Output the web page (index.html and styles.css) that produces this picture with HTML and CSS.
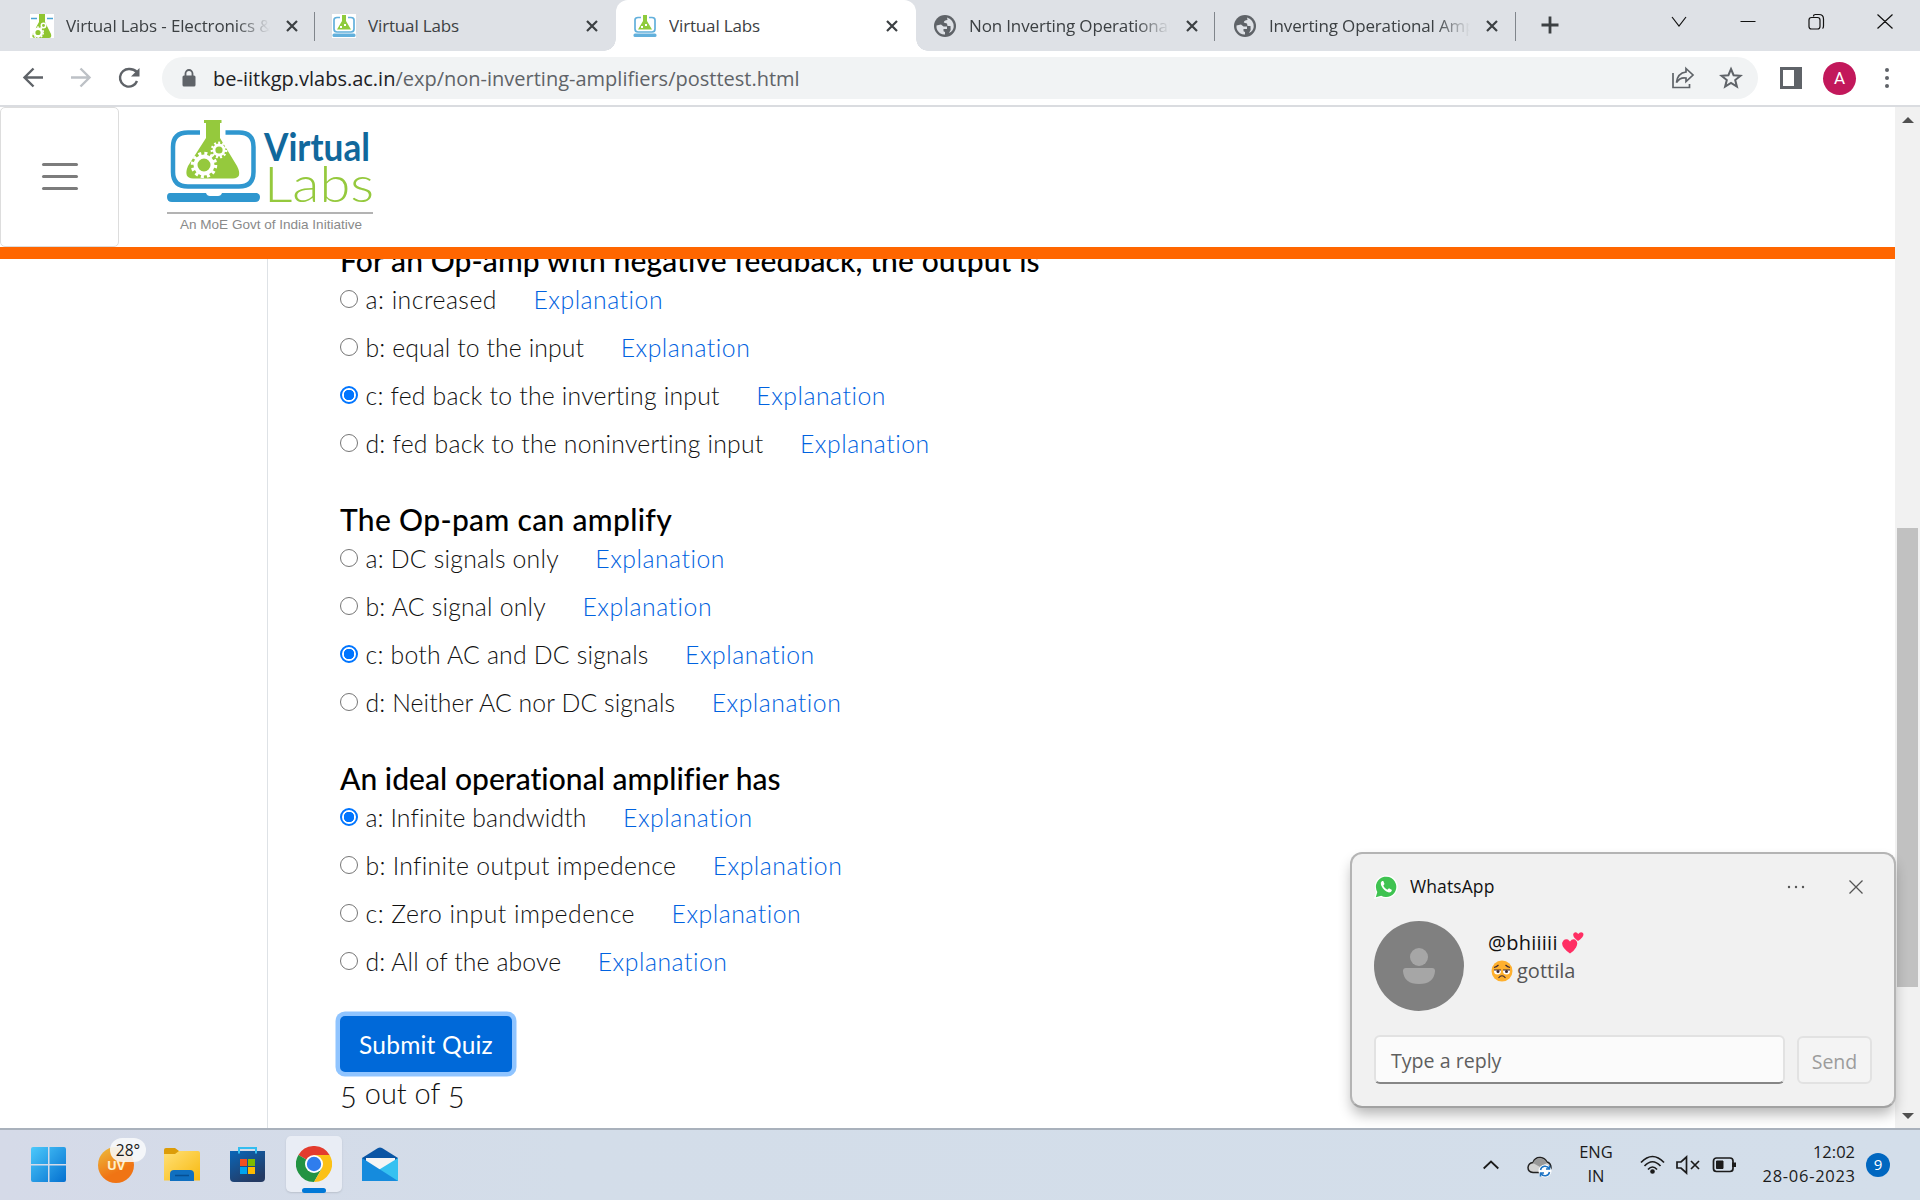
FILE: index.html
```html
<!DOCTYPE html>
<html lang="en">
<head>
<meta charset="utf-8">
<title>Virtual Labs</title>
<link rel="stylesheet" href="styles.css">
</head>
<body>
<svg width="0" height="0" class="defs">
  <symbol id="x" viewBox="0 0 12 12"><path d="M1 1L11 11M11 1L1 11" fill="none" stroke="#3c4043" stroke-width="2.200"/></symbol>
  <symbol id="flask" viewBox="0 0 24 24"><rect width="24" height="24" fill="#fff"/><path d="M1 4.500H7M17 4.500H23" stroke="#4aa3d4" stroke-width="1.600"/><path d="M9 0H15V8L21 20Q22 24 19 24H4Q1 23 3 19L9 8Z" fill="#8fc531"/><circle cx="8" cy="18.500" r="3.800" fill="none" stroke="#fff" stroke-width="2.400"/><circle cx="8" cy="18.500" r="5.400" fill="none" stroke="#fff" stroke-width="1.200" stroke-dasharray="2 1.400"/><circle cx="13.500" cy="11.500" r="2.200" fill="none" stroke="#fff" stroke-width="1.500"/></symbol>
  <symbol id="laptop" viewBox="0 0 24 24"><rect width="24" height="24" fill="#fff"/><path d="M8 3.500H5Q2 3.500 2 6V15Q2 18 5 18H19Q22 18 22 15V6Q22 3.500 19 3.500H16" fill="none" stroke="#62b0dc" stroke-width="1.700"/><path d="M10 1H14V7L19 15.500H5L10 7Z" fill="#8fcb3c"/><path d="M8 13h2M12 11h2" stroke="#fff" stroke-width="2"/><rect x="0.500" y="19.500" width="23" height="3.600" rx="1.500" fill="#62b0dc"/></symbol>
  <symbol id="globe" viewBox="0 0 22 22"><circle cx="11" cy="11" r="11" fill="#5f6368"/><path d="M13 2.500L13.500 5Q10 5.200 9.800 7.500Q11 8 13 8.500L13.500 11H16.500Q17.500 14.500 15 18Q19 16.500 19.700 12Q20 5 13 2.500ZM2.500 10.500Q2 15 6 18.200Q8.500 19.800 11 19.600V17L9.500 16.300V14H13V11.500H9.500L7 9.500Z" fill="#dee1e6"/></symbol>
</svg>

<header class="tabs">
  <div class="tab"><svg class="fav"><use href="#flask"/></svg><span class="title fade">Virtual Labs - Electronics &amp; C</span><svg class="cross"><use href="#x"/></svg></div>
  <div class="tab ruled"><svg class="fav"><use href="#laptop"/></svg><span class="title">Virtual Labs</span><svg class="cross"><use href="#x"/></svg></div>
  <div class="tab active"><svg class="fav"><use href="#laptop"/></svg><span class="title">Virtual Labs</span><svg class="cross"><use href="#x"/></svg></div>
  <div class="tab"><svg class="fav globe"><use href="#globe"/></svg><span class="title fade">Non Inverting Operational A</span><svg class="cross"><use href="#x"/></svg></div>
  <div class="tab ruled last"><svg class="fav globe"><use href="#globe"/></svg><span class="title fade">Inverting Operational Amplifier</span><svg class="cross"><use href="#x"/></svg></div>
  <svg class="plus" viewBox="0 0 18 18"><path d="M9 0.500V17.500M0.500 9H17.500" stroke="#3c4043" stroke-width="2.800"/></svg>
  <svg class="winctl" viewBox="0 0 240 30" fill="none" stroke="#111" stroke-width="1.200"><path d="M12 11L19 20L26 11M80.500 15.500H95.500M153.500 10.500Q153.500 8.500 155.500 8.500H159Q163.500 8.500 163.500 13V20Q163.500 22 162.500 22.500M217.500 8.500L232.500 22.500M232.500 8.500L217.500 22.500"/><rect x="149" y="11.500" width="11" height="11.500" rx="2.500"/></svg>
</header>

<nav class="toolbar">
  <svg class="navbtns" viewBox="0 0 162 54" fill="none" stroke="#5f6368" stroke-width="2.400"><path d="M43 26.500H25M33.500 17.500L24.500 26.500L33.500 35.500"/><path d="M71 26.500H89M80.500 17.500L89.500 26.500L80.500 35.500" stroke="#bdc1c6"/><path d="M137 21Q133.500 17.800 129 18A8.800 8.800 0 1 0 137 30"/><path d="M139.500 17V25.500H131Z" fill="#5f6368" stroke="none"/></svg>
  <div class="omnibox">
    <svg class="lock" viewBox="0 0 14 18"><rect x="0.500" y="6.500" width="13" height="11" rx="1.500" fill="#5f6368"/><path d="M3.500 7V4.500A3.500 3.500 0 0 1 10.500 4.500V7" fill="none" stroke="#5f6368" stroke-width="1.800"/></svg>
    <span class="url"><b>be-iitkgp.vlabs.ac.in</b>/exp/non-inverting-amplifiers/posttest.html</span>
    <svg class="share" viewBox="0 0 24 24" fill="none" stroke="#5f6368" stroke-width="1.700"><path d="M2 7V21.500H18.500V18"/><path d="M15 2.500L22 9L15 15.500V12Q9 11 5.500 16.500Q6.500 7 15 6Z"/></svg>
    <svg class="star" viewBox="0 0 24 24"><path d="M12 3L14.600 9.200L21.500 9.700L16.200 14L17.900 20.700L12 17L6.100 20.700L7.800 14L2.500 9.700L9.400 9.200Z" fill="none" stroke="#5f6368" stroke-width="2"/></svg>
  </div>
  <svg class="panel" viewBox="0 0 22 22"><path d="M1.500 1.500H20.500V20.500H1.500Z" fill="none" stroke="#5f6368" stroke-width="3"/><path d="M14 1H21V21H14Z" fill="#5f6368"/></svg>
  <span class="account">A</span>
  <svg class="dots" viewBox="0 0 4 20" fill="#5f6368"><circle cx="2" cy="2" r="2"/><circle cx="2" cy="10" r="2"/><circle cx="2" cy="18" r="2"/></svg>
</nav>

<main class="page">
  <section class="view">
    <div class="banner">
      <button class="menu"><i></i><i></i><i></i></button>
      <svg class="logo" viewBox="0 0 220 130">
        <path d="M33 25.500H21Q6 25.500 6 40V65Q6 79.500 21 79.500H72Q86.500 79.500 86.500 65V40Q86.500 25.500 72 25.500H58.500" fill="none" stroke="#2f97cf" stroke-width="4.500"/>
        <path d="M37 13H54.500V16H53V31L70 59Q76 71 66 71.500H26Q16 71 21 59L39 31V16H37Z" fill="#95c93d"/>
        <circle cx="37" cy="58" r="8.500" fill="none" stroke="#fff" stroke-width="4"/>
        <circle cx="37" cy="58" r="11.500" fill="none" stroke="#fff" stroke-width="3.500" stroke-dasharray="3 3.020"/>
        <circle cx="52" cy="43" r="5" fill="none" stroke="#fff" stroke-width="2.800"/>
        <circle cx="52" cy="43" r="7.200" fill="none" stroke="#fff" stroke-width="2.400" stroke-dasharray="2 2.110"/>
        <path d="M3 86H39Q40 89 43 89H51Q54 89 55 86H90Q93 87 93 90Q93 95 88 95H5Q0 95 0 90Q0 86 3 86Z" fill="#2f97cf"/>
        <text x="97" y="54" class="lv" textLength="106" lengthAdjust="spacingAndGlyphs">Virtual</text>
        <text x="97" y="95" class="ll" textLength="110" lengthAdjust="spacingAndGlyphs">Labs</text>
        <path d="M0 106H206" stroke="#b3b3b3" stroke-width="2"/>
        <text x="13" y="122" class="lt" textLength="182" lengthAdjust="spacingAndGlyphs">An MoE Govt of India Initiative</text>
      </svg>
    </div>
    <div class="body">
      <aside class="side"></aside>
      <form class="quiz">
        <h3 class="h-mid">For an Op-amp with negative feedback, the output is</h3>
        <label><input type="radio" name="q1"><span class="s8">a: increased</span><a>Explanation</a></label>
        <label><input type="radio" name="q1"><span class="s4">b: equal to the input</span><a>Explanation</a></label>
        <label><input type="radio" name="q1" checked><span class="s5">c: fed back to the inverting input</span><a>Explanation</a></label>
        <label><input type="radio" name="q1"><span class="s5">d: fed back to the noninverting input</span><a>Explanation</a></label>
        <h3 class="h-wide">The Op-pam can amplify</h3>
        <label><input type="radio" name="q2"><span class="s5">a: DC signals only</span><a>Explanation</a></label>
        <label><input type="radio" name="q2"><span class="s5">b: AC signal only</span><a>Explanation</a></label>
        <label><input type="radio" name="q2" checked><span class="s5">c: both AC and DC signals</span><a>Explanation</a></label>
        <label><input type="radio" name="q2"><span class="s4">d: Neither AC nor DC signals</span><a>Explanation</a></label>
        <h3 class="h-tight">An ideal operational amplifier has</h3>
        <label><input type="radio" name="q3" checked><span class="s4">a: Infinite bandwidth</span><a>Explanation</a></label>
        <label><input type="radio" name="q3"><span class="s6">b: Infinite output impedence</span><a>Explanation</a></label>
        <label><input type="radio" name="q3"><span class="s8">c: Zero input impedence</span><a>Explanation</a></label>
        <label><input type="radio" name="q3"><span class="s4">d: All of the above</span><a>Explanation</a></label>
        <button type="button" class="submit">Submit Quiz</button>
        <p class="score"><span class="five">5</span><span> out of </span><span class="five">5</span></p>
      </form>
    </div>
  </section>
  <div class="scroll"><i class="up"></i><b></b><i class="down"></i></div>
</main>

<footer class="taskbar">
  <div class="apps">
    <svg viewBox="0 0 36 36"><defs><linearGradient id="w" x2="1" y2="1"><stop stop-color="#4cc9fb"/><stop offset="1" stop-color="#0470d0"/></linearGradient></defs><path d="M2 0H17V17H0V2Q0 0 2 0ZM18.500 0H33Q35 0 35 2V17H18.500ZM0 18.500H17V35H2Q0 35 0 33ZM18.500 18.500H35V33Q35 35 33 35H18.500Z" fill="url(#w)"/></svg>
    <div class="weather"><svg viewBox="0 0 36 36"><defs><linearGradient id="u" x1=".2" x2=".7" y2="1"><stop stop-color="#edb63a"/><stop offset=".7" stop-color="#f07414"/></linearGradient></defs><circle cx="18" cy="18" r="18" fill="url(#u)"/><text x="9" y="22.500" class="uv">UV</text></svg><span>28°</span></div>
    <svg viewBox="0 0 36 36"><defs><linearGradient id="f" x2="1" y2="1"><stop stop-color="#ffe076"/><stop offset="1" stop-color="#f8b90f"/></linearGradient></defs><path d="M0 3Q0 1 2 1H11L15 4H25V10H0Z" fill="#dc9c08"/><path d="M0 7H11L15 4H34Q36 4 36 6V33.500H0Z" fill="url(#f)"/><path d="M6 34V27Q6 23 10 23H26Q30 23 30 27V34Z" fill="#0f6fc0"/><path d="M11 28.500H25" stroke="#064f92" stroke-width="1.500"/></svg>
    <svg viewBox="0 0 36 36"><defs><linearGradient id="s" x2=".6" y2="1"><stop stop-color="#0a66b8"/><stop offset="1" stop-color="#243a63"/></linearGradient></defs><path d="M9 7V1H26V7" fill="none" stroke="#33bdf0" stroke-width="2"/><path d="M0 4H35V31Q35 35 31 35H4Q0 35 0 31Z" fill="url(#s)"/><path d="M9 1V6.500M26 1V6.500" stroke="#33bdf0" stroke-width="2"/><path d="M10 12H17V19H10Z" fill="#f25022"/><path d="M18 12H25V19H18Z" fill="#7fba00"/><path d="M10 20H17V27H10Z" fill="#00a4ef"/><path d="M18 20H25V27H18Z" fill="#ffb900"/></svg>
    <div class="current"><svg viewBox="0 0 36 36"><path d="M18 18L2.400 9A18 18 0 0 1 33.600 9Z" fill="#e33b2e"/><path d="M18 18L2.400 9A18 18 0 0 0 18 36L25.800 22.500Z" fill="#229342"/><path d="M18 9H33.600A18 18 0 0 1 18 36L25.800 22.500Z" fill="#fbc116"/><circle cx="18" cy="18" r="9" fill="#fff"/><circle cx="18" cy="18" r="7.200" fill="#2f7ded"/></svg><i></i></div>
    <svg viewBox="0 0 36 36"><path d="M0 11L16 1Q18 0 20 1L36 11V20H0Z" fill="#0a55a4"/><path d="M4 11H33V24H4Z" fill="#f5f5f5"/><path d="M36 11V34H18L10 27Z" fill="#35c1f1"/><path d="M0 11L36 34H0Z" fill="#158bdd"/></svg>
  </div>
  <div class="tray">
    <svg class="chev" viewBox="0 0 16 10"><path d="M0.700 8.500L8 1.500L15.300 8.500" fill="none" stroke="#1b1b1b" stroke-width="1.800"/></svg>
    <svg class="cloud" viewBox="0 0 26 22"><path d="M6 16.500Q1 16 1 11.500Q1.500 7 6 6.500Q8 1 13.500 1.500Q18 2 20 6Q24 7 24 12Q23 16.500 18 16.500Z" fill="#d2d2d2" stroke="#222" stroke-width="1.500"/><path d="M6 7Q8 2 13.500 2.200Q18 3 20 7L13 11Z" fill="#999"/><circle cx="18" cy="15" r="6.500" fill="#fff"/><path d="M13.500 14A4.600 4.600 0 0 1 22 12.500M22.500 16A4.600 4.600 0 0 1 14 17.500M22.500 9.500V13H19M13.500 20.500V17H17" fill="none" stroke="#1c73c4" stroke-width="1.500"/></svg>
    <div class="lang"><span>ENG</span><span>IN</span></div>
    <svg class="status" viewBox="0 0 98 20" fill="none" stroke="#1b1b1b" stroke-width="1.700"><path d="M1 7.500Q12.500 -4.500 24 7.500M4.500 11Q12.500 2.500 20.500 11M8 14.500Q12.500 9.500 17 14.500"/><circle cx="12.500" cy="16.500" r="1.500" fill="#1b1b1b"/><path d="M37 7H41L46.500 2V18L41 13H37ZM51 6L59 14M59 6L51 14"/><rect x="73.500" y="3" width="19.500" height="13.500" rx="3"/><path d="M76.500 6H83V13.500H76.500Z" fill="#1b1b1b" stroke-width="1"/><path d="M94 7.500V12" stroke-width="4"/></svg>
    <div class="clock"><span>12:02</span><span class="date">28-06-2023</span></div>
    <span class="count">9</span>
  </div>
</footer>

<section class="toast">
  <div class="thead">
    <svg class="wa" viewBox="0 0 24 24"><path d="M0 24L2 17A11.500 11.500 0 1 1 7 22Z" fill="#fff"/><path d="M1.800 22.200L3.300 17A10.200 10.200 0 1 1 7.200 20.800Z" fill="#3fc351"/><path d="M8 6Q6 7.500 7 10Q9.500 16 15 17.500Q17.500 17.500 18 15L15 13.200L13.300 14.800Q10.500 13.500 9.300 10.800L10.500 9L9.300 6Z" fill="#fff"/></svg>
    <span class="app">WhatsApp</span>
    <svg class="more" viewBox="0 0 18 4" fill="#555"><circle cx="2" cy="2" r="1.200"/><circle cx="9" cy="2" r="1.200"/><circle cx="16" cy="2" r="1.200"/></svg>
    <svg class="dismiss" viewBox="0 0 14 14"><path d="M0.500 0.500L13.500 13.500M13.500 0.500L0.500 13.500" stroke="#555" stroke-width="1.300"/></svg>
  </div>
  <div class="msg">
    <svg class="face" viewBox="0 0 90 90"><circle cx="45" cy="45" r="45" fill="#808080"/><circle cx="45" cy="36" r="9" fill="#a6a6a6"/><path d="M32 47H58Q61 47 61 50Q60 63 45 63Q30 63 29 50Q29 47 32 47Z" fill="#a6a6a6"/></svg>
    <div class="lines">
      <div class="who"><span>@bhiiiii</span><svg viewBox="0 0 22 22" fill="#ff2e63"><path d="M8 21.500Q-1 15 0.300 10.500Q2 6 6 7.500L8 9.500Q10 6.500 13 7.500Q17 10 14 15.500Q12 19 8 21.500Z"/><path d="M16 9Q10 4.500 11.500 1.500Q14 -1 16.200 2Q18.500 -1 21 1Q23 4.500 16 9Z"/></svg></div>
      <div class="what"><svg viewBox="0 0 22 22"><circle cx="11" cy="11" r="10.500" fill="#ffb02e"/><path d="M3 10H10V11A3.500 3.500 0 0 1 3 11ZM12 10H19V11A3.500 3.500 0 0 1 12 11Z" fill="#fff"/><path d="M3 10H10M12 10H19M7.500 18Q11 13.500 14.500 18M3 7.500Q5.500 7 7.500 5M19 7.500Q16.500 7 14.500 5" fill="none" stroke="#402a32" stroke-width="1.200"/><circle cx="7" cy="11.500" r="1.500" fill="#402a32"/><circle cx="15.500" cy="11.500" r="1.500" fill="#402a32"/></svg><span>gottila</span></div>
    </div>
  </div>
  <div class="reply"><div class="field">Type a reply</div><div class="send">Send</div></div>
</section>
</body>
</html>
```
FILE: styles.css
```css
* { box-sizing: border-box; }
body { margin: 0; width: 1920px; height: 1200px; overflow: hidden; display: flex; flex-direction: column; background: #fff; font-family: "Open Sans", sans-serif; color: #202124; }
svg { display: block; flex: none; }
.defs { position: absolute; }

/* tab strip */
.tabs { height: 51px; flex: none; display: flex; background: #dee1e6; padding-left: 16px; }
.tab { width: 300px; height: 51px; display: flex; align-items: center; padding: 0 18px 0 17px; font-size: 17px; color: #3c4043; position: relative; }
.tab:first-child { padding-left: 14px; }
.tab:nth-child(2) { padding-left: 16px; }
.fav { width: 24px; height: 24px; margin-right: 12px; }
.fav.globe { width: 22px; height: 22px; margin: 0 13px 0 1px; }
.title { flex: 1; white-space: nowrap; overflow: hidden; letter-spacing: -0.150px; margin-right: 14px; line-height: 26px; }
.fade { mask-image: linear-gradient(90deg, #000 calc(100% - 36px), transparent calc(100% - 2px)); }
.cross { width: 12px; height: 12px; }
.active { background: #fff; border-radius: 12px 12px 0 0; }
.active::before, .active::after { content: ""; position: absolute; bottom: 0; width: 12px; height: 12px; background: radial-gradient(circle at 0 0, transparent 11.500px, #fff 12px); left: -12px; }
.active::after { left: 300px; background: radial-gradient(circle at 100% 0, transparent 11.500px, #fff 12px); }
.ruled::before, .last::after { content: ""; position: absolute; left: -2px; top: 12px; width: 1px; height: 29px; background: #80858b; }
.last::after { left: 299px; }
.plus { width: 18px; height: 18px; margin: 16px 0 0 25px; }
.winctl { width: 240px; height: 30px; margin: 6px 0 0 101px; }

/* toolbar */
.toolbar { height: 56px; flex: none; display: flex; align-items: center; border-bottom: 2px solid #dadce0; background: #fff; }
.navbtns { width: 162px; height: 54px; }
.omnibox { width: 1596px; height: 42px; border-radius: 21px; background: #f1f3f4; display: flex; align-items: center; padding-left: 20px; }
.lock { width: 14px; height: 18px; margin-right: 17px; }
.url { flex: 1; font-size: 20px; color: #5f6368; white-space: nowrap; }
.url b { font-weight: 400; color: #202124; }
.share { width: 24px; height: 24px; margin-right: 24px; }
.star { width: 24px; height: 24px; margin-right: 15px; }
.panel { width: 22px; height: 22px; margin-left: 22px; }
.account { width: 33px; height: 33px; margin-left: 21px; border-radius: 50%; background: #c2185b; color: #fff; font: 17px/33px Roboto, sans-serif; text-align: center; }
.dots { width: 4px; height: 20px; margin-left: 29px; }

/* web page */
.page { height: 1021px; flex: none; display: flex; }
.view { width: 1895px; display: flex; flex-direction: column; overflow: hidden; }
.banner { height: 152px; flex: none; display: flex; border-bottom: 12px solid #ff6600; background: #fff; }
.menu { width: 119px; height: 140px; border: 1px solid #ddd; border-radius: 5px; background: #fff; padding: 0 0 1px; display: flex; flex-direction: column; align-items: center; justify-content: center; gap: 9px; }
.menu i { width: 36px; height: 3px; border-radius: 2px; background: #7c7c7c; }
.logo { width: 220px; height: 130px; margin-left: 48px; }
.lv { font: 700 39px "Lato", sans-serif; fill: #11689c; }
.ll { font: 300 50px "Lato", sans-serif; fill: #95c93d; }
.lt { font: 13px "Liberation Sans", sans-serif; fill: #8a8a8a; }
.body { flex: 1; display: flex; min-height: 0; }
.side { width: 268px; flex: none; border-right: 1px solid #dee2e6; }
.quiz { flex: 1; margin-top: -17px; padding-left: 72px; font-family: "Lato", sans-serif; clip-path: inset(17px 0 0 0); }
.quiz h3 { height: 37px; margin: 0 0 9px; font-size: 30px; line-height: 36px; font-weight: 500; color: #000; white-space: nowrap; }
.quiz label { display: flex; align-items: center; height: 24px; margin-bottom: 24px; font-size: 24.800px; line-height: 24px; font-weight: 300; color: #111; white-space: nowrap; }
.quiz label + h3 { margin-top: 45px; }
.quiz input { appearance: none; width: 18px; height: 18px; margin: -2px 7.500px 0 0; border: 1.500px solid #767676; border-radius: 50%; flex: none; }
.quiz input:checked { border: 2px solid #0075ff; background: radial-gradient(circle, #0075ff 5px, #fff 5.500px); }
.quiz a { margin-left: 36.500px; color: #0062e0; letter-spacing: 0.500px; }
.s4 { letter-spacing: 0.100px; }
.s5 { letter-spacing: 0.210px; }
.s6 { letter-spacing: 0.290px; }
.s8 { letter-spacing: 0.480px; }
.h-mid { letter-spacing: 0.100px; }
.h-wide { letter-spacing: 0.330px; }
.h-tight { letter-spacing: 0.040px; }
.submit { display: block; width: 172px; height: 56px; margin-top: 42px; border: 0; border-radius: 5px; background: #0069d9; box-shadow: 0 0 0 4.500px #8fc4ff; color: #fff; font: 24.500px "Lato", sans-serif; letter-spacing: 0.200px; padding: 0; }
.score { margin: 3px 0 0; font-size: 29px; line-height: 36px; font-weight: 300; color: #111; white-space: pre; display: flex; }
.five { margin-top: 4px; }

.scroll { width: 25px; background: #f1f1f1; display: flex; flex-direction: column; align-items: center; }
.scroll i { border: 6px solid transparent; border-top: 0; border-bottom: 6px solid #505050; margin-top: 10px; }
.scroll b { width: 21px; height: 459px; margin-top: 405px; background: #c1c1c1; }
.scroll .down { border-bottom: 0; border-top: 6px solid #505050; margin-top: 126px; }

/* taskbar */
.taskbar { flex: 1; border-top: 2px solid #a9b1bc; background: linear-gradient(90deg, #d5dae8, #d3dde9 30%, #d3deea); display: flex; justify-content: space-between; color: #1b1b1b; }
.apps { display: flex; padding: 17px 0 0 31px; gap: 30px; }
.apps svg { width: 36px; height: 36px; }
.apps > svg:first-child { margin-right: 1px; }
.weather { position: relative; width: 36px; }
.weather span { position: absolute; left: 12px; top: -9px; width: 36px; height: 24px; border-radius: 12px; background: rgba(248, 249, 251, 0.880); font-size: 15.500px; line-height: 24px; text-align: center; }
.uv { font: 700 13px "Open Sans", sans-serif; fill: #fff0c8; }
.current { position: relative; width: 56px; height: 56px; margin: -11px -10px 0 -10px; padding: 10px; border-radius: 5px; background: #e9edf5; box-shadow: 0 1px 2px #b9c0cc; }
.current i { position: absolute; left: 16px; bottom: -1px; width: 24px; height: 5px; border-radius: 3px; background: #0078d7; }
.tray { display: flex; align-items: center; padding-right: 30px; }
.chev { width: 16px; height: 10px; margin-right: 28px; }
.cloud { width: 26px; height: 22px; margin-right: 18px; margin-top: 3px; }
.lang, .clock { display: flex; flex-direction: column; font-size: 16.500px; line-height: 24px; margin-top: -2px; }
.lang { width: 50px; align-items: center; margin-right: 19px; }
.status { width: 98px; height: 20px; margin-right: 17px; }
.clock { width: 100px; align-items: flex-end; }
.date { letter-spacing: 0.700px; margin-right: -0.700px; }
.count { width: 24px; height: 24px; margin-left: 11px; border-radius: 50%; background: #0067c0; color: #fff; font-size: 15px; line-height: 23px; text-align: center; }

/* notification */
.toast { position: absolute; left: 1350px; top: 852px; width: 546px; height: 256px; border: 2px solid #b4b4b4; border-bottom-color: #a2a2a2; border-radius: 12px; background: #f1f1f1; box-shadow: 0 8px 14px -2px rgba(0, 0, 0, 0.300); padding: 0 22px; }
.thead { display: flex; align-items: center; height: 66px; }
.wa { width: 24px; height: 24px; }
.app { flex: 1; margin-left: 12px; font-size: 17.500px; letter-spacing: 0.100px; line-height: 22px; margin-top: -2px; color: #111; }
.more { width: 18px; height: 4px; margin-right: 44px; }
.dismiss { width: 14px; height: 14px; margin-right: 9px; }
.msg { display: flex; height: 115px; }
.face { width: 90px; height: 90px; margin-top: 1px; }
.lines { margin: 9px 0 0 24px; font-size: 20px; line-height: 28px; }
.who, .what { display: flex; align-items: center; gap: 4px; color: #111; }
.who { letter-spacing: 0.250px; }
.what { color: #555; padding-left: 3px; }
.lines svg { width: 22px; height: 22px; }
.reply { display: flex; gap: 12px; align-items: flex-end; }
.field { width: 411px; height: 49px; border: 2px solid #e2e2e2; border-bottom-color: #868686; border-radius: 6px; background: #fbfbfb; padding-left: 15px; font-size: 19.600px; line-height: 47px; color: #5f5f5f; }
.send { width: 75px; height: 48px; border: 2px solid #e2e2e2; border-radius: 6px; background: #f4f4f4; text-align: center; font-size: 19.500px; line-height: 47px; color: #9c9c9c; }
```
